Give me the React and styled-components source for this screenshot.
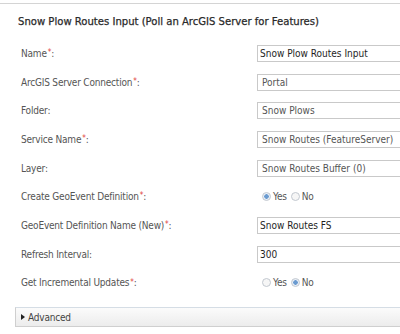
import React from "react";
import styled, { createGlobalStyle } from "styled-components";

const Global = createGlobalStyle`
  html, body { margin: 0; padding: 0; background: #fff; }
  body { font-family: "DejaVu Sans Condensed", "DejaVu Sans", sans-serif; overflow: hidden; }
`;

const Page = styled.div`
  width: 400px;
  height: 334px;
  padding: 3px 0 0 15px;
  box-sizing: border-box;
  overflow: hidden;
`;

const Header = styled.div`
  border-top: 1px solid #d4d4d4;
  margin-left: -15px;
  padding-left: 18px;
  height: 35px;
  display: flex;
  align-items: center;
  font-size: 11.2px;
  color: #2a2a2a;
  -webkit-text-stroke: 0.25px #2a2a2a;
`;

const Form = styled.div`
  display: grid;
  grid-template-columns: 236px 1fr;
  grid-auto-rows: 28.7px;
  padding-left: 6px;
`;

const Label = styled.div`
  display: flex;
  align-items: center;
  font-size: 10px;
  letter-spacing: -0.2px;
  color: #555;
`;

const Req = styled.span`
  color: #e0403a;
  font-size: 8px;
  align-self: flex-start;
  margin-top: 9px;
  margin-left: 1px;
`;

const Field = styled.div`
  display: flex;
  align-items: center;
`;

const Input = styled.div`
  width: 200px;
  height: 17px;
  box-sizing: border-box;
  border: 1px solid #c9c9c9;
  border-right: none;
  padding-left: ${(p) => (p.$dark ? 2 : 4)}px;
  display: flex;
  align-items: center;
  font-size: 10px;
  color: ${(p) => (p.$dark ? "#1e1e1e" : "#555")};
  white-space: nowrap;
`;

const Radios = styled.div`
  display: flex;
  align-items: center;
  padding-left: 5px;
  font-size: 10px;
  letter-spacing: -0.2px;
  color: #555;
`;

const Option = styled.span`
  display: flex;
  align-items: center;
  margin-right: 4px;
`;

const Dot = styled.span`
  width: 9px;
  height: 9px;
  box-sizing: border-box;
  border-radius: 50%;
  border: 1px solid #c2c8d0;
  background: ${(p) =>
    p.$on ? "radial-gradient(circle, #6b9bd0 0 2px, #e8eff7 2.5px)" : "#f6f6f6"};
  margin-right: 2px;
`;

const Advanced = styled.div`
  margin-top: 10px;
  height: 20px;
  box-sizing: border-box;
  border: 1px solid #cfcfcf;
  border-top-color: #d5dde5;
  border-right: none;
  background: linear-gradient(#fbfbfb, #ececec);
  display: flex;
  align-items: center;
  padding-left: 5px;
  font-size: 10px;
  letter-spacing: -0.2px;
  color: #444;
`;

const Caret = styled.span`
  width: 0;
  height: 0;
  border-top: 3px solid transparent;
  border-bottom: 3px solid transparent;
  border-left: 4px solid #222;
  margin-right: 3px;
`;

function Row({ label, req, children }) {
  return (
    <>
      <Label>
        {label}
        {req && <Req>*</Req>}:
      </Label>
      <Field>{children}</Field>
    </>
  );
}

function Radio({ value }) {
  return (
    <Radios>
      <Option>
        <Dot $on={value === "yes"} />
        Yes
      </Option>
      <Option>
        <Dot $on={value === "no"} />
        No
      </Option>
    </Radios>
  );
}

export default function App() {
  return (
    <Page>
      <Global />
      <Header>Snow Plow Routes Input (Poll an ArcGIS Server for Features)</Header>
      <Form>
        <Row label="Name" req>
          <Input $dark>Snow Plow Routes Input</Input>
        </Row>
        <Row label="ArcGIS Server Connection" req>
          <Input>Portal</Input>
        </Row>
        <Row label="Folder">
          <Input>Snow Plows</Input>
        </Row>
        <Row label="Service Name" req>
          <Input>Snow Routes (FeatureServer)</Input>
        </Row>
        <Row label="Layer">
          <Input>Snow Routes Buffer (0)</Input>
        </Row>
        <Row label="Create GeoEvent Definition" req>
          <Radio value="yes" />
        </Row>
        <Row label="GeoEvent Definition Name (New)" req>
          <Input $dark>Snow Routes FS</Input>
        </Row>
        <Row label="Refresh Interval">
          <Input $dark>300</Input>
        </Row>
        <Row label="Get Incremental Updates" req>
          <Radio value="no" />
        </Row>
      </Form>
      <Advanced>
        <Caret />
        Advanced
      </Advanced>
    </Page>
  );
}
